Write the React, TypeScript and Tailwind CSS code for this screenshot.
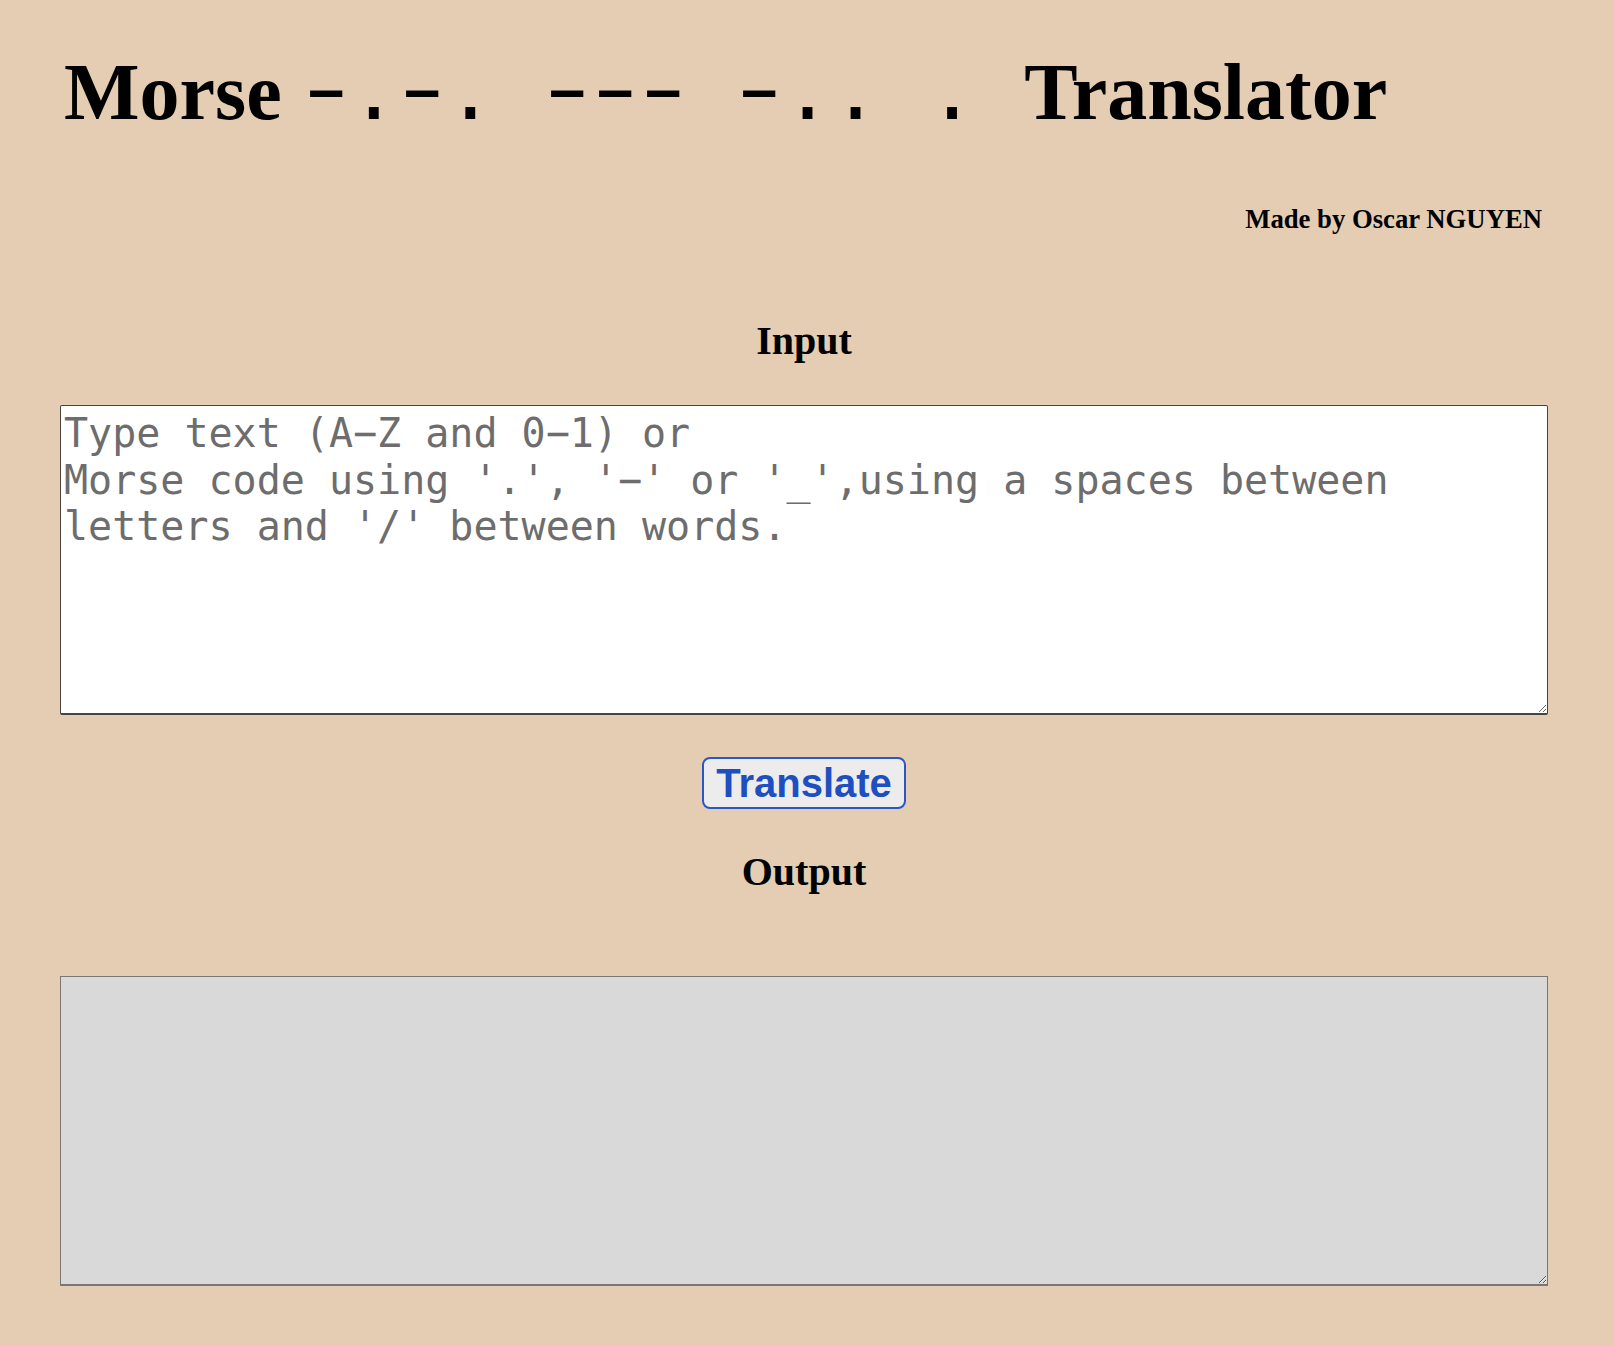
import { useState } from "react";

const MORSE: Record<string, string> = {
  A: ".-", B: "-...", C: "-.-.", D: "-..", E: ".", F: "..-.", G: "--.",
  H: "....", I: "..", J: ".---", K: "-.-", L: ".-..", M: "--", N: "-.",
  O: "---", P: ".--.", Q: "--.-", R: ".-.", S: "...", T: "-", U: "..-",
  V: "...-", W: ".--", X: "-..-", Y: "-.--", Z: "--..",
  "0": "-----", "1": ".----", "2": "..---", "3": "...--", "4": "....-",
  "5": ".....", "6": "-....", "7": "--...", "8": "---..", "9": "----.",
};

const REVERSE: Record<string, string> = Object.fromEntries(
  Object.entries(MORSE).map(([k, v]) => [v, k])
);

const TITLE_CODE = "\u2212.\u2212. \u2212\u2212\u2212 \u2212.. . ";

function translate(input: string) {
  const text = input.trim();
  if (!text) return "";
  // morse in, text out
  if (/^[.\-_\u2212\s/]+$/.test(text)) {
    return text
      .replace(/[_\u2212]/g, "-")
      .split("/")
      .map((word) =>
        word
          .trim()
          .split(/\s+/)
          .map((code) => REVERSE[code] ?? "?")
          .join("")
      )
      .join(" ");
  }
  return text
    .toUpperCase()
    .split(/\s+/)
    .map((word) =>
      word
        .split("")
        .map((ch) => MORSE[ch] ?? "")
        .filter(Boolean)
        .join(" ")
    )
    .join(" / ");
}

export default function App() {
  const [input, setInput] = useState("");
  const [output, setOutput] = useState("");

  return (
    <div className="min-h-screen bg-[#e4cdb3] font-['Liberation_Serif',serif] text-black">
      <div className="ml-[60px] w-[1488px] pb-[60px]">
        <h1 className="pl-[4px] pt-[46px] text-[80px] font-bold leading-[92px] whitespace-pre">
          {"Morse "}
          <span className="font-['DejaVu_Sans_Mono',monospace] font-normal">
            {TITLE_CODE.split("").map((ch, i) =>
              ch === "\u2212" ? (
                <span key={i} className="inline-block scale-x-[0.78]">
                  {ch}
                </span>
              ) : (
                ch
              )
            )}
          </span>
          Translator
        </h1>

        <div className="mt-[66px] flex justify-end pr-[6px]">
          <h3 className="text-[26.7px] font-bold leading-[31px]">
            Made by Oscar NGUYEN
          </h3>
        </div>

        <h2 className="mt-[83px] text-center text-[40px] font-bold leading-[46px]">
          Input
        </h2>

        <textarea
          value={input}
          onChange={(e) => setInput(e.target.value)}
          placeholder={
            "Type text (A\u2212Z and 0\u22121) or\nMorse code using '.', '\u2212' or '_',using a spaces between letters and '/' between words."
          }
          className="mt-[41px] block h-[310px] w-full rounded-[2px] border border-b-2 border-[#444444] bg-white px-[3px] pt-[4px] font-['DejaVu_Sans_Mono',monospace] text-[40px] leading-[46.5px] text-black placeholder:text-[#6d6d6d]"
        />

        <div className="mt-[42px] flex justify-center">
          <button
            onClick={() => setOutput(translate(input))}
            className="h-[52px] rounded-[8px] border-2 border-[#2a57c8] bg-[#ececec] px-[12px] font-['Liberation_Sans',sans-serif] text-[40px] font-bold leading-[46px] text-[#1d4fc0]"
          >
            Translate
          </button>
        </div>

        <h2 className="mt-[40px] text-center text-[40px] font-bold leading-[46px]">
          Output
        </h2>

        <textarea
          readOnly
          value={output}
          className="mt-[81px] block h-[310px] w-full border border-b-2 border-[#777777] bg-[#d9d9d9] px-[3px] pt-[4px] font-['DejaVu_Sans_Mono',monospace] text-[40px] leading-[46.5px] text-black"
        />
      </div>
    </div>
  );
}
